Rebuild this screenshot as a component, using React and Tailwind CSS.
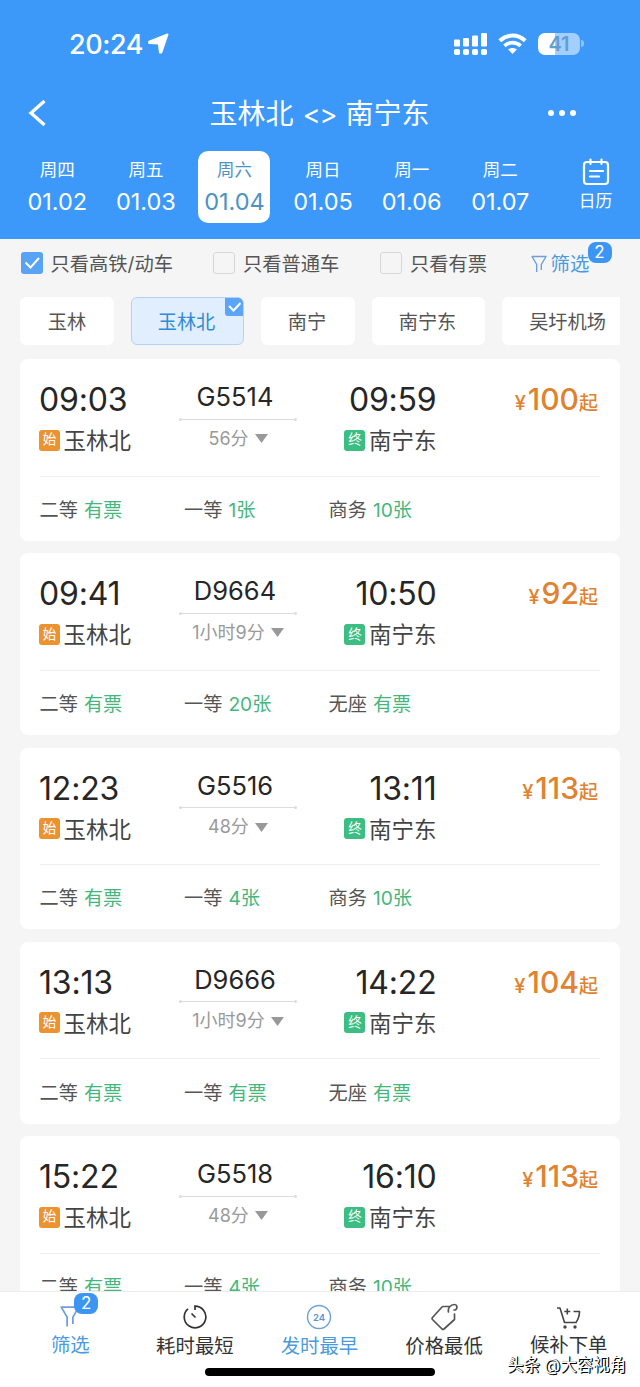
const days = [
    { week: '周四', date: '01.02' },
    { week: '周五', date: '01.03' },
    { week: '周六', date: '01.04', active: true },
    { week: '周日', date: '01.05' },
    { week: '周一', date: '01.06' },
    { week: '周二', date: '01.07' },
];

const trains = [
    { no: 'G5514', start: '09:03', end: '09:59', duration: '56分', price: 100, seats: [['二等', '有票'], ['一等', '1张'], ['商务', '10张']] },
    { no: 'D9664', start: '09:41', end: '10:50', duration: '1小时9分', price: 92, seats: [['二等', '有票'], ['一等', '20张'], ['无座', '有票']] },
    { no: 'G5516', start: '12:23', end: '13:11', duration: '48分', price: 113, seats: [['二等', '有票'], ['一等', '4张'], ['商务', '10张']] },
    { no: 'D9666', start: '13:13', end: '14:22', duration: '1小时9分', price: 104, seats: [['二等', '有票'], ['一等', '有票'], ['无座', '有票']] },
    { no: 'G5518', start: '15:22', end: '16:10', duration: '48分', price: 113, seats: [['二等', '有票'], ['一等', '4张'], ['商务', '10张']] },
];

const StatusBar = () => (
    <div className="flex h-[87px] items-center pl-[69px] pr-[56px] text-white">
        <span className="pt-px text-[27px] leading-none font-medium tracking-[-0.4px]">20:24</span>
        <svg className="ml-[5px] h-[21px] w-[21px]" viewBox="0 0 21 21" fill="currentColor" stroke="currentColor" strokeWidth="2" strokeLinejoin="round">
            <path d="M19.500 1.500L13.300 19.500L12 19.500L10.800 10.500L1.200 10L1.200 8.600z" />
        </svg>
        <svg className="ml-auto h-[22px] w-[33px]" viewBox="0 0 33 22" fill="currentColor">
            <rect x="0" y="6.5" width="6" height="7" rx="1.3" />
            <rect x="9" y="5" width="6" height="8.5" rx="1.3" />
            <rect x="18" y="2.5" width="6" height="11" rx="1.3" />
            <rect x="27" y="0" width="6" height="13.5" rx="1.3" />
            <rect x="0" y="16" width="6" height="6" rx="1.8" />
            <rect x="9" y="16" width="6" height="6" rx="1.8" />
            <rect x="18" y="16" width="6" height="6" rx="1.8" />
            <rect x="27" y="16" width="6" height="6" rx="1.8" />
        </svg>
        <svg className="ml-[11px] h-[21px] w-[29px]" viewBox="0 0 29 21" fill="none" stroke="currentColor" strokeWidth="4">
            <path d="M1.800 7.800c7.200-7 18.200-7 25.400 0" />
            <path d="M6.400 12.800c4.600-4.200 11.600-4.200 16.200 0" strokeWidth="3.6" />
            <path d="M14.500 21l-4.300-4.600c2.400-2 6.200-2 8.600 0z" fill="currentColor" stroke="none" />
        </svg>
        <div className="ml-[11px] flex h-[22px] w-[42px] items-center justify-center rounded-[7px] bg-linear-to-r from-white from-41% to-[#a3cefd] to-41% text-[20px] leading-none font-semibold text-[#5f9fd6]">
            41
        </div>
        <div className="ml-px h-[7px] w-[3px] rounded-r-full bg-[#8fc3fc]" />
    </div>
);

const TitleBar = () => (
    <div className="grid h-[51px] grid-cols-[1fr_auto_1fr] items-center pr-[64px] pl-[28px] text-white">
        <svg className="h-[28px] w-[18px]" viewBox="0 0 18 28" fill="none" stroke="currentColor" strokeWidth="3.3">
            <path d="M16.500 2L3 14l13.500 12" />
        </svg>
        <h1 className="ml-[35px] pt-[3px] text-[28px] leading-none font-normal">玉林北<span className="mx-[8px] inline-block w-[36px] text-center text-[27px] tracking-[-1px]">&lt;&gt;</span>南宁东</h1>
        <div className="flex justify-end gap-[5px]">
            <i className="size-[6px] rounded-full bg-white" />
            <i className="size-[6px] rounded-full bg-white" />
            <i className="size-[6px] rounded-full bg-white" />
        </div>
    </div>
);

const DateTabs = () => (
    <div className="flex h-[100px] pt-[12.5px] pl-[13px] text-white">
        {days.map((day) => (
            <div key={day.date} className="flex w-[88.6px] shrink-0 justify-center">
                <div className={`flex h-[72px] w-[72px] flex-col items-center rounded-[10px] pt-[9.5px] ${day.active ? 'bg-white text-[#4c93c4]' : ''}`}>
                    <span className="text-[17.5px] leading-[20px]">{day.week}</span>
                    <span className="mt-[9px] text-[23.5px] leading-[26px]">{day.date}</span>
                </div>
            </div>
        ))}
        <div className="ml-[7px] flex w-[88px] flex-col items-center pt-[7.5px]">
            <svg className="h-[28px] w-[28px]" viewBox="0 0 28 28" fill="none" stroke="currentColor" strokeWidth="2.2" strokeLinecap="round">
                <rect x="2" y="4" width="24" height="22" rx="3" />
                <path d="M8.500 1.500v4.500M19.500 1.500v4.500M8 13h13M8 18.500h9" />
            </svg>
            <span className="mt-[5px] text-[16.8px] leading-[20px]">日历</span>
        </div>
    </div>
);

const Checkbox = ({ label, checked, className }) => (
    <label className={`flex shrink-0 items-center gap-[8px] ${className}`}>
        <span className={`flex size-[22px] items-center justify-center rounded-[3px] ${checked ? 'bg-[#59a3f5]' : 'border-[1.5px] border-[#d8d8d8]'}`}>
            {checked && (
                <svg className="h-[12px] w-[16px]" viewBox="0 0 16 12" fill="none" stroke="white" strokeWidth="2">
                    <path d="M1.500 5.500l5 5L15 1" />
                </svg>
            )}
        </span>
        <span className="pt-[3px] text-[19.3px] leading-none text-[#555]">{label}</span>
    </label>
);

const FunnelIcon = ({ className }) => (
    <svg className={className} viewBox="0 0 16 18" fill="none" stroke="#6d9fdc" strokeWidth="1.4" strokeLinejoin="round">
        <path d="M5.700 17V9.500L1 1.500h14l-4.700 8v5.500" />
    </svg>
);

const Badge = ({ className }) => (
    <span className={`absolute flex h-[21px] w-[24px] items-center justify-center rounded-[8px] bg-[#3d95f3] text-[17px] leading-none text-white ${className}`}>2</span>
);

const Filters = () => (
    <div className="flex h-[50px] items-center pl-[20.5px]">
        <Checkbox label="只看高铁/动车" checked className="w-[192.5px]" />
        <Checkbox label="只看普通车" className="w-[167px]" />
        <Checkbox label="只看有票" className="w-[150.5px]" />
        <div className="relative flex items-center">
            <FunnelIcon className="h-[18px] w-[16px]" />
            <span className="ml-[4px] pt-[3px] text-[19.4px] leading-none text-[#4a9ade]">筛选</span>
            <Badge className="-top-[10px] left-[57px]" />
        </div>
    </div>
);

const Stations = () => (
    <div className="mx-[20px] flex h-[48px] gap-[17px] overflow-hidden text-[19.2px] leading-[22px] text-[#555]">
        <div className="flex w-[94px] shrink-0 items-center justify-center rounded-[6px] bg-white pt-[2px]">玉林</div>
        <div className="relative flex w-[113px] shrink-0 items-center justify-center overflow-hidden rounded-[6px] border border-[#b3d3f3] bg-[#e1eefd] pt-[2px] pr-[2px] text-[#2f8bd3]">
            玉林北
            <span className="absolute top-0 right-0 flex h-[18px] w-[18px] items-center justify-center rounded-bl-[3px] bg-[#5ba5f6]">
                <svg className="h-[10px] w-[13px]" viewBox="0 0 13 10" fill="none" stroke="white" strokeWidth="2">
                    <path d="M1 4l4.500 4.500L12.500 1" />
                </svg>
            </span>
        </div>
        <div className="flex w-[94px] shrink-0 items-center justify-center rounded-[6px] bg-white pt-[2px] pr-[2px]">南宁</div>
        <div className="flex w-[113px] shrink-0 items-center justify-center rounded-[6px] bg-white pt-[2px] pr-[2px]">南宁东</div>
        <div className="flex w-[132px] shrink-0 items-center justify-center rounded-[6px] bg-white pt-[2px] pr-[1px]">吴圩机场</div>
    </div>
);

const StationName = ({ tag, name, color }) => (
    <div className="flex items-center gap-[3.5px] text-[22.5px] leading-[28px] text-[#444]">
        <span className={`flex size-[21px] items-center justify-center rounded-[3px] text-[13.5px] leading-none text-white ${color}`}>{tag}</span>
        <span className="pt-[2px]">{name}</span>
    </div>
);

const TrainCard = ({ train }) => (
    <div className="mb-[12.6px] h-[181.7px] shrink-0 rounded-[8px] bg-white px-[20px]">
        <div className="flex h-[117.5px] border-b-[1.5px] border-[#f0f0f0] pt-[22px]">
            <div className="-ml-px w-[140px]">
                <p className="text-[32px] leading-[38px] tracking-[-0.2px] text-[#262626]">{train.start}</p>
                <div className="mt-[6px]"><StationName tag="始" name="玉林北" color="bg-[#ec932f]" /></div>
            </div>
            <div className="flex w-[118px] flex-col items-center">
                <p className="pr-[6px] text-[25.5px] leading-[32px] text-[#262626]">{train.no}</p>
                <div className="mt-[4.5px] flex w-full items-center">
                    <i className="size-[3px] rounded-full bg-[#dcdcdc]" />
                    <i className="h-px flex-1 bg-[#dcdcdc]" />
                    <i className="size-[3px] rounded-full bg-[#dcdcdc]" />
                </div>
                <div className="mt-[6px] flex items-center gap-[6px] text-[18px] leading-[24px] text-[#999]">
                    {train.duration}
                    <svg className="h-[9px] w-[13px]" viewBox="0 0 13 9" fill="#999"><path d="M0 0h13L6.500 9z" /></svg>
                </div>
            </div>
            <div className="flex w-[139.5px] flex-col items-end">
                <p className="text-[32px] leading-[38px] tracking-[-0.2px] text-[#262626]">{train.end}</p>
                <div className="mt-[6px]"><StationName tag="终" name="南宁东" color="bg-[#3cbd82]" /></div>
            </div>
            <p className="flex-1 pr-[2px] text-right leading-[37px] font-medium text-[#e0822f]">
                <span className="mr-[2px] text-[20px]">¥</span>
                <span className="text-[30px]">{train.price}</span>
                <span className="text-[19px]">起</span>
            </p>
        </div>
        <div className="flex h-[64px] items-center pt-[4px] text-[19.2px] leading-none text-[#555]">
            {train.seats.map(([type, left]) => (
                <div key={type} className="-ml-[0.5px] flex w-[145px] gap-[6px]">
                    <span>{type}</span>
                    <span className="text-[#45b77c]">{left}</span>
                </div>
            ))}
        </div>
    </div>
);

const NavItem = ({ label, color, children }) => (
    <div className={`flex flex-1 flex-col items-center pt-[10px] ${color}`}>
        <div className="relative flex h-[30px] items-center">{children}</div>
        <span className="text-[19.4px] leading-[24px]">{label}</span>
    </div>
);

const BottomNav = () => (
    <nav className="relative h-[96.5px] shrink-0 border-t border-[#ececec] bg-white">
        <div className="flex pr-[9px] pl-[8px]">
            <NavItem label={<span className="mt-px block">筛选</span>} color="text-[#4a9ade]">
                <FunnelIcon className="h-[23px] w-[20px]" />
                <Badge className="-top-[9px] left-[14px]" />
            </NavItem>
            <NavItem label={<span className="mt-[2px] block">耗时最短</span>} color="text-[#333]">
                <svg className="h-[24px] w-[24px]" viewBox="0 0 24 24" fill="none" stroke="currentColor" strokeWidth="1.7">
                    <path d="M12 5V1.200a10.800 10.800 0 1 1-7 2.600M8.500 8.500l4 4" />
                </svg>
            </NavItem>
            <NavItem label={<span className="mt-[2px] block">发时最早</span>} color="text-[#4a9ade]">
                <svg className="h-[26px] w-[26px]" viewBox="0 0 26 26">
                    <circle cx="13" cy="13" r="11.5" fill="none" stroke="#6d9fdc" strokeWidth="1.4" />
                    <text x="13" y="16.5" textAnchor="middle" fontSize="9.5" fontWeight="600" fill="#5d93d8">24</text>
                </svg>
            </NavItem>
            <NavItem label={<span className="mt-[2px] block">价格最低</span>} color="text-[#333]">
                <svg className="h-[28px] w-[28px]" viewBox="0 0 28 28" fill="none" stroke="#555" strokeWidth="1.7" strokeLinejoin="round" strokeLinecap="round">
                    <path d="M19 3.500H13.500Q12.500 3.500 12 4L2.500 14.500a1.500 1.500 0 0 0 0 2l9.500 9.500a1.500 1.500 0 0 0 2 0L24.500 16.500V11" />
                    <path d="M18.500 9C17.500 5 20.500 1.500 24.500 1.500c2.500 0 3.500 3.500 1 5.500l-1.500 0" />
                </svg>
            </NavItem>
            <NavItem label={<span className="mt-px block">候补下单</span>} color="text-[#333]">
                <svg className="mt-[3px] h-[24px] w-[24px]" viewBox="0 0 24 24" fill="none" stroke="#444" strokeWidth="1.6" strokeLinejoin="round">
                    <path d="M0 2h3l4.500 14.500h11.500Q22.500 11.500 22.500 5.500h-6M10.300 2.500v6M7.300 5.500h6" />
                    <circle cx="8" cy="21" r="0.9" fill="#444" />
                    <circle cx="18" cy="21" r="0.9" fill="#444" />
                </svg>
            </NavItem>
        </div>
        <div className="absolute top-[76px] left-[205px] h-[8px] w-[230px] rounded-full bg-black" />
        <span className="absolute top-[63px] left-[507px] text-[16.5px] leading-[20px] tracking-[-0.1px] whitespace-nowrap text-white [text-shadow:1px_1px_0_#000,1px_0_0_#000]">头条 @大容视角</span>
    </nav>
);

const App = () => (
    <div className="flex h-[1387px] w-[640px] flex-col overflow-hidden bg-[#f5f5f5] font-['Inter','Noto_Sans_CJK_SC',sans-serif]" lang="zh-CN">
        <header className="h-[238.5px] shrink-0 bg-[#3d99f9]">
            <StatusBar />
            <TitleBar />
            <DateTabs />
        </header>
        <div className="shrink-0">
            <Filters />
            <div className="pt-[8px]"><Stations /></div>
        </div>
        <main className="flex min-h-0 flex-1 flex-col overflow-hidden px-[20px] pt-[14.5px]">
            {trains.map((train) => (
                <TrainCard key={train.no} train={train} />
            ))}
        </main>
        <BottomNav />
    </div>
);

export default App;
